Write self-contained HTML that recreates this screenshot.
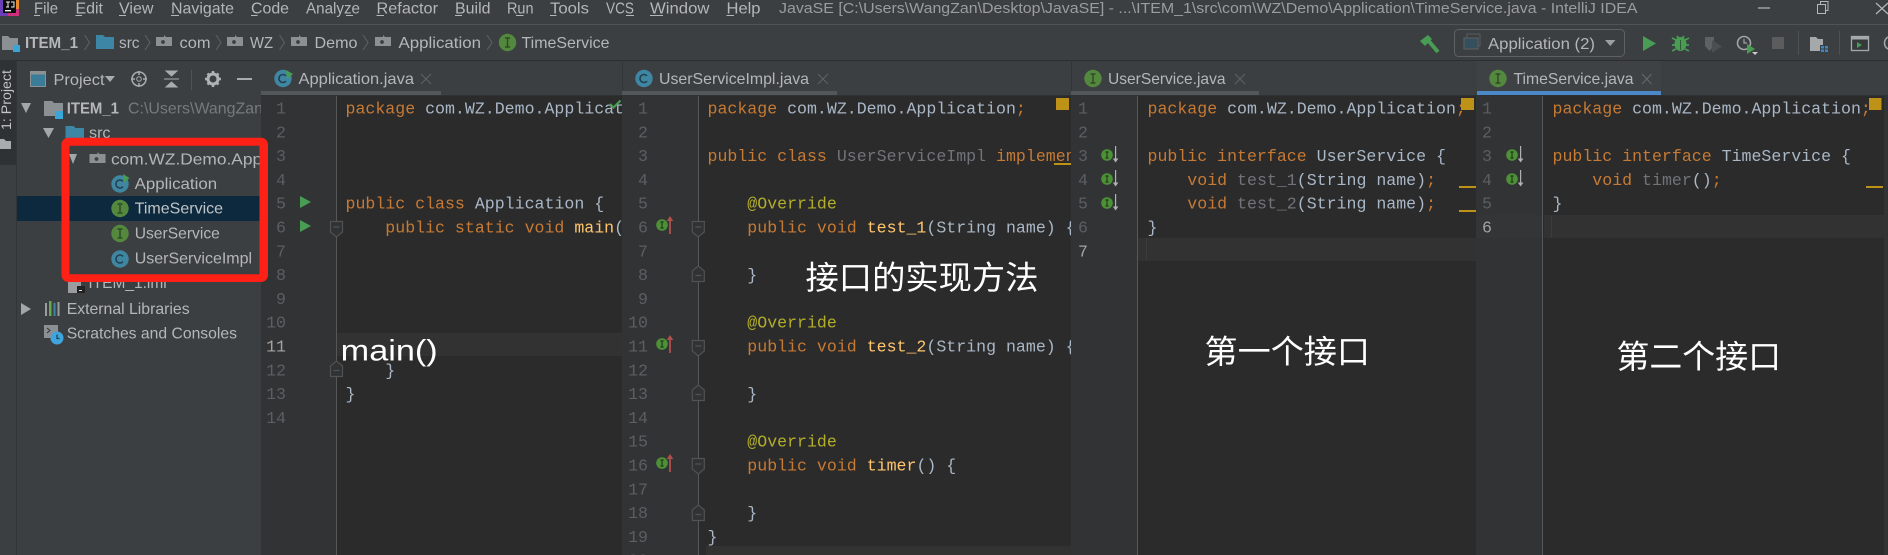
<!DOCTYPE html>
<html lang="zh">
<head>
<meta charset="utf-8">
<title>IntelliJ IDEA</title>
<style>
html,body{margin:0;padding:0;background:#3c3f41;width:1888px;height:555px;overflow:hidden}
svg{display:block}
text{white-space:pre}
.u{font-family:"Liberation Sans","Noto Sans CJK SC",sans-serif;font-size:16px;fill:#b4b7b9}
.t{fill:#9a9d9f;font-size:15px}
.d{fill:#777a7c}
.c{font-family:"Liberation Mono",monospace;font-size:16.58px;fill:#a9b7c6}
.n{font-family:"Liberation Mono",monospace;font-size:16.58px;fill:#5c5f61;text-anchor:end}
.na{fill:#a4a3a3}
.k{fill:#c67a34}
.m{fill:#ffc66d}
.a{fill:#b3ae2a}
.g{fill:#72737a}
.w{font-family:"Liberation Sans","Noto Sans CJK SC",sans-serif;fill:#fff}
.z{font-family:"Liberation Sans","Noto Sans CJK SC",sans-serif;fill:#fff;font-size:32.5px}
</style>
</head>
<body>
<svg xmlns="http://www.w3.org/2000/svg" width="1888" height="555" viewBox="0 0 1888 555">
<defs>
<g id="iI"><circle cx="9" cy="9" r="8.7" fill="#54883f"/><path d="M6.5 4.5h5M6.5 13.5h5M9 4.5v9" stroke="#2f4d22" stroke-width="1.5" fill="none"/></g>
<g id="iC"><circle cx="9" cy="9" r="8.7" fill="#3f86a3"/><path d="M12 6.4A4 4 0 1 0 12 11.6" stroke="#24404e" stroke-width="1.6" fill="none"/></g>
<g id="fold"><path d="M9 3H1v9h16V3h-6L9 1z" fill="#8a9093"/><circle cx="8" cy="8" r="1.9" fill="#3c3f41"/></g>
<path id="fd" d="M.5.5h12v10.500l-6 5-6-5zM3.500 6h6" fill="#303234" stroke="#505254" stroke-width="1.200"/>
<path id="fu" d="M.5 15.500h12V5L6.500 0 .5 5zM3.500 9.500h6" fill="#303234" stroke="#505254" stroke-width="1.200"/>
<g id="ov"><circle cx="6" cy="6" r="5.800" fill="#4e9038"/><path d="M4.400 3h3.200M4.400 9h3.200M6 3v6" stroke="#1f3d16" stroke-width="1.200"/><path d="M14 -3l3.300 5h-6.600zM13.100 1h1.800v14h-1.800z" fill="#b0504a"/></g>
<g id="im"><circle cx="6" cy="6" r="5.800" fill="#4e9038"/><path d="M4.400 3h3.200M4.400 9h3.200M6 3v6" stroke="#1f3d16" stroke-width="1.200"/><path d="M14 -3h1.200v13h-1.200zM11.800 9.500h5.600l-2.800 4z" fill="#afb1b3"/></g>
<clipPath id="c0"><rect x="17" y="96" width="244" height="459"/></clipPath>
<clipPath id="c1"><rect x="336" y="96" width="286" height="459"/></clipPath>
<clipPath id="c2"><rect x="698" y="96" width="373" height="459"/></clipPath>
<clipPath id="c3"><rect x="1137" y="96" width="339" height="459"/></clipPath>
<clipPath id="c4"><rect x="1543" y="96" width="341" height="459"/></clipPath>
</defs>

<rect width="1888" height="555" fill="#3c3f41"/>

<!-- title bar -->
<rect y="24" width="1888" height="1" fill="#505355"/>
<rect y="60" width="1888" height="1" fill="#2c2e2f"/>
<rect x="0" y="0" width="19" height="16" fill="#cf2f7c"/>
<rect x="0" y="0" width="8" height="16" fill="#6a3fb8"/>
<rect x="13" y="0" width="6" height="9" fill="#e98a2c"/>
<rect x="3" y="0" width="13" height="13" fill="#0c0c0c"/>
<rect x="5" y="10" width="6" height="1.400" fill="#eee"/>
<path d="M6 2h4M8 2v5M6 7h3M11 2h3v5h-3" stroke="#eee" stroke-width="1" fill="none"/>
<text class="u" x="34" y="13.500" textLength="24" lengthAdjust="spacingAndGlyphs">File</text>
<text class="u" x="75.500" y="13.500" textLength="27.500" lengthAdjust="spacingAndGlyphs">Edit</text>
<text class="u" x="119" y="13.500" textLength="34.500" lengthAdjust="spacingAndGlyphs">View</text>
<text class="u" x="171" y="13.500" textLength="63" lengthAdjust="spacingAndGlyphs">Navigate</text>
<text class="u" x="251" y="13.500" textLength="38" lengthAdjust="spacingAndGlyphs">Code</text>
<text class="u" x="306" y="13.500" textLength="54" lengthAdjust="spacingAndGlyphs">Analyze</text>
<text class="u" x="376.500" y="13.500" textLength="61.500" lengthAdjust="spacingAndGlyphs">Refactor</text>
<text class="u" x="455" y="13.500" textLength="35.500" lengthAdjust="spacingAndGlyphs">Build</text>
<text class="u" x="507" y="13.500" textLength="26.500" lengthAdjust="spacingAndGlyphs">Run</text>
<text class="u" x="550" y="13.500" textLength="39" lengthAdjust="spacingAndGlyphs">Tools</text>
<text class="u" x="606" y="13.500" textLength="28" lengthAdjust="spacingAndGlyphs">VCS</text>
<text class="u" x="650" y="13.500" textLength="59.500" lengthAdjust="spacingAndGlyphs">Window</text>
<text class="u" x="726.500" y="13.500" textLength="34" lengthAdjust="spacingAndGlyphs">Help</text>
<path d="M34 15.500h6M75.500 15.500h6.500M119 15.500h7M171 15.500h8M251 15.500h6.500M346 15.500h7M376.500 15.500h7.500M455 15.500h7M516 15.500h7.500M550 15.500h6.500M626 15.500h8M650 15.500h13M726.500 15.500h7.500" stroke="#b4b7b9" stroke-width="1" fill="none"/>
<text class="u t" x="779" y="13" textLength="858.500" lengthAdjust="spacingAndGlyphs">JavaSE [C:\Users\WangZan\Desktop\JavaSE] - ...\ITEM_1\src\com\WZ\Demo\Application\TimeService.java - IntelliJ IDEA</text>
<path d="M1758 8h12" stroke="#b4b7b9" stroke-width="1.200"/>
<path d="M1817.500 4.500h8v9h-8zM1820.500 4.500v-3h7.500v9h-2.500" stroke="#b4b7b9" stroke-width="1" fill="none"/>
<path d="M1876 3l12 11M1888 3l-12 11" stroke="#b4b7b9" stroke-width="1.200" fill="none"/>

<!-- breadcrumb -->
<path d="M2 36h6l2 2h8v12H2z" fill="#8a9093"/><rect x="13" y="45" width="7" height="7" fill="#3aa6d8"/>
<text class="u" x="25" y="48" textLength="53" lengthAdjust="spacingAndGlyphs" style="font-weight:bold">ITEM_1</text>
<path d="M84.500 35l5 7.500-5 7.500M145 35l5 7.500-5 7.500M216 35l5 7.500-5 7.500M279.500 35l5 7.500-5 7.500M363 35l5 7.500-5 7.500M487 35l5 7.500-5 7.500" stroke="#5f6264" stroke-width="1" fill="none"/>
<path d="M96 35h7l2 2h9v12H96z" fill="#3d86a5"/>
<text class="u" x="119" y="48" textLength="20.500" lengthAdjust="spacingAndGlyphs">src</text>
<use href="#fold" x="155" y="34"/>
<text class="u" x="179.500" y="48" textLength="31" lengthAdjust="spacingAndGlyphs">com</text>
<use href="#fold" x="226" y="34"/>
<text class="u" x="250" y="48" textLength="23" lengthAdjust="spacingAndGlyphs">WZ</text>
<use href="#fold" x="290" y="34"/>
<text class="u" x="314.500" y="48" textLength="43" lengthAdjust="spacingAndGlyphs">Demo</text>
<use href="#fold" x="374" y="34"/>
<text class="u" x="398.500" y="48" textLength="82.500" lengthAdjust="spacingAndGlyphs">Application</text>
<use href="#iI" x="498.500" y="33.500"/>
<text class="u" x="521.500" y="48" textLength="88" lengthAdjust="spacingAndGlyphs">TimeService</text>

<!-- right toolbar -->
<path d="M1438 52l-11-13" stroke="#499c54" stroke-width="4" fill="none"/>
<path d="M1420 41l8-6 4 4-7 7z" fill="#499c54"/>
<rect x="1454.500" y="29.500" width="170" height="27" rx="4" fill="none" stroke="#5e6163" stroke-width="1"/>
<rect x="1467" y="34" width="13" height="12" fill="none" stroke="#555859" stroke-width="1.200"/>
<rect x="1464" y="38" width="14" height="11" fill="#34505c" stroke="#5e6163" stroke-width="1"/>
<text class="u" x="1488" y="49" textLength="107" lengthAdjust="spacingAndGlyphs">Application (2)</text>
<path d="M1605 40h10.500l-5.250 6z" fill="#9da0a2"/>
<path d="M1643 36l13 7.500-13 7.500z" fill="#499c54"/>
<ellipse cx="1680.500" cy="44" rx="6" ry="7" fill="#499c54"/>
<path d="M1672 38l4 2M1689 38l-4 2M1672 45h17M1672 51l4-2M1689 51l-4-2M1677 36l2 3M1684 36l-2 3" stroke="#499c54" stroke-width="1.800" fill="none"/>
<path d="M1680.500 40v10" stroke="#2f5a33" stroke-width="1"/>
<path d="M1705 37h9v9l-4.500 5-4.500-5z" fill="#5f6264"/><path d="M1712 40l10 6.500-10 6.500z" fill="#4c4f51"/>
<circle cx="1744" cy="43" r="6.500" fill="none" stroke="#a2a5a7" stroke-width="1.600"/>
<path d="M1744 39v4h3" stroke="#a2a5a7" stroke-width="1.200" fill="none"/>
<path d="M1747 44l8 5-8 5z" fill="#499c54"/><path d="M1752 52h6l-3 3z" fill="#ccc"/>
<rect x="1772" y="37" width="12" height="12" fill="#5a5c5e"/>
<rect x="1798" y="31" width="1" height="24" fill="#4e5153"/>
<path d="M1810 37h6l2 2h5v12h-13z" fill="#a6a9ab"/>
<rect x="1820" y="45" width="8" height="7" fill="#3c3f41"/>
<path d="M1821 46h3v2.500h-3zM1825 46h3v2.500h-3zM1821 49.500h3V52h-3zM1825 49.500h3V52h-3z" fill="#3d86c6"/>
<rect x="1839" y="31" width="1" height="24" fill="#4e5153"/>
<rect x="1851.500" y="36.500" width="17" height="14" fill="#36393a" stroke="#a6a9ab" stroke-width="1.300"/>
<rect x="1851.500" y="36.500" width="17" height="3" fill="#a6a9ab"/>
<path d="M1857 42l5 3-5 3z" fill="#499c54"/>
<path d="M1888 37a7 7 0 0 0-3.500 6 7 7 0 0 0 3.500 6" fill="none" stroke="#a6a9ab" stroke-width="1.500"/>

<!-- left tool strip -->
<rect x="0" y="60" width="16" height="105" fill="#2f3234"/>
<rect x="16" y="61" width="1" height="494" fill="#323537"/>
<text class="u" transform="translate(11,130) rotate(-90)" textLength="60" lengthAdjust="spacingAndGlyphs" style="font-size:13.500px;fill:#c2c4c6">1: Project</text>
<path d="M0 139h4l2 2h5v8H0z" fill="#a9acae"/>

<!-- project header -->
<rect x="30.500" y="71.500" width="15" height="15" fill="#3b7d99" stroke="#8c9194" stroke-width="1"/>
<rect x="30.500" y="71.500" width="15" height="3" fill="#8c9194"/>
<text class="u" x="53.500" y="85" textLength="51" lengthAdjust="spacingAndGlyphs">Project</text>
<path d="M105 76h10l-5 6z" fill="#a9acae"/>
<circle cx="139" cy="79" r="7" fill="none" stroke="#a9acae" stroke-width="1.500"/>
<circle cx="139" cy="79" r="2.300" fill="none" stroke="#a9acae" stroke-width="1"/>
<path d="M139 71v4M139 83v4M131 79h4M143 79h4" stroke="#a9acae" stroke-width="1.500"/>
<path d="M164 79h15M166 71l5.500 5 5.500-5zM166 87l5.500-5 5.500 5z" stroke="#a9acae" fill="#a9acae" stroke-width="1"/>
<rect x="191" y="70" width="1" height="20" fill="#505355"/>
<circle cx="213" cy="79" r="5" fill="none" stroke="#b0b3b5" stroke-width="3"/>
<path d="M213 71v3M213 84v3M205 79h3M218 79h3M207.500 73.500l2 2M216.500 82.500l2 2M218.500 73.500l-2 2M209.500 82.500l-2 2" stroke="#b0b3b5" stroke-width="2.500"/>
<path d="M237 79h15" stroke="#a9acae" stroke-width="2"/>

<!-- editor regions -->
<rect x="261" y="96" width="75" height="459" fill="#313335"/>
<rect x="336" y="96" width="286" height="459" fill="#2b2b2b"/>
<rect x="622" y="96" width="76" height="459" fill="#313335"/>
<rect x="698" y="96" width="373" height="459" fill="#2b2b2b"/>
<rect x="1071" y="96" width="66" height="459" fill="#313335"/>
<rect x="1137" y="96" width="339" height="459" fill="#2b2b2b"/>
<rect x="1476" y="96" width="67" height="459" fill="#313335"/>
<rect x="1543" y="96" width="341" height="459" fill="#2b2b2b"/>
<rect x="1884" y="96" width="4" height="459" fill="#313335"/>
<rect x="261" y="95" width="1627" height="1" fill="#2f3133"/>
<!-- current lines -->
<rect x="337" y="333" width="285" height="23" fill="#323232"/>
<rect x="706" y="546" width="365" height="9" fill="#323232"/>
<rect x="1138" y="238" width="338" height="23" fill="#323232"/>
<rect x="1476" y="215" width="67" height="23" fill="#333537"/>
<rect x="1544" y="215" width="340" height="23" fill="#323232"/>
<rect x="1146" y="238" width="1" height="23" fill="#3c3c3c"/>
<rect x="1551" y="215" width="1" height="23" fill="#3c3c3c"/>
<!-- gutter dividers -->
<rect x="336" y="96" width="1" height="459" fill="#555759"/>
<rect x="698" y="96" width="1" height="459" fill="#555759"/>
<rect x="1137" y="96" width="1" height="459" fill="#555759"/>
<rect x="1542" y="96" width="1" height="459" fill="#555759"/>

<!-- tabs -->
<rect x="261" y="91" width="180" height="4" fill="#54575a"/>
<use href="#iC" x="274" y="69.500"/>
<path d="M286 70l7 4-6 5z" fill="#499c54"/>
<text class="u" x="298.500" y="84" textLength="115.500" lengthAdjust="spacingAndGlyphs">Application.java</text>
<path d="M421 74l10 10M431 74l-10 10" stroke="#5f6264" stroke-width="1" fill="none"/>
<rect x="622" y="60" width="1" height="35" fill="#323537"/>
<rect x="622" y="91" width="215" height="4" fill="#54575a"/>
<use href="#iC" x="635" y="69.500"/>
<text class="u" x="659" y="84" textLength="150" lengthAdjust="spacingAndGlyphs">UserServiceImpl.java</text>
<path d="M818 74l10 10M828 74l-10 10" stroke="#5f6264" stroke-width="1" fill="none"/>
<rect x="1071" y="60" width="1" height="35" fill="#323537"/>
<rect x="1071" y="91" width="188" height="4" fill="#54575a"/>
<use href="#iI" x="1084" y="69.500"/>
<text class="u" x="1108" y="84" textLength="117.500" lengthAdjust="spacingAndGlyphs">UserService.java</text>
<path d="M1235 74l10 10M1245 74l-10 10" stroke="#5f6264" stroke-width="1" fill="none"/>
<rect x="1477" y="61" width="184" height="30" fill="#3f4244"/>
<rect x="1477" y="91" width="184" height="4" fill="#4a88c7"/>
<use href="#iI" x="1489" y="69.500"/>
<text class="u" x="1513.500" y="84" textLength="120" lengthAdjust="spacingAndGlyphs">TimeService.java</text>
<path d="M1642 74l9.500 10M1651.500 74l-9.500 10" stroke="#66696b" stroke-width="1" fill="none"/>

<!-- project tree -->
<rect x="17" y="196" width="244" height="25" fill="#0d293e"/>
<g clip-path="url(#c0)">
<path d="M21 103h10l-5 10z" fill="#a4a7a9"/>
<path d="M44 101h8l2 2h9v13H44z" fill="#8a9093"/><rect x="55" y="111" width="8" height="8" fill="#3aa6d8"/>
<text class="u" x="66.700" y="113.500" textLength="52.300" lengthAdjust="spacingAndGlyphs" style="font-weight:bold">ITEM_1</text>
<text class="u d" x="128" y="113.500" textLength="135" lengthAdjust="spacingAndGlyphs">C:\Users\WangZan</text>
<path d="M43 128h11l-5.500 10z" fill="#a4a7a9"/>
<path d="M65.500 126h8l2 2h8.500v12h-18.500z" fill="#3d86a5"/>
<text class="u" x="89" y="138" textLength="21.500" lengthAdjust="spacingAndGlyphs">src</text>
<path d="M69 154h8l-4 10z" fill="#a4a7a9"/>
<use href="#fold" x="88.500" y="151"/>
<text class="u" x="111" y="164.300" textLength="205" lengthAdjust="spacingAndGlyphs">com.WZ.Demo.Application</text>
<use href="#iC" x="111" y="175"/>
<path d="M123 174l6.500 4-5.500 4.500z" fill="#499c54"/>
<text class="u" x="134.700" y="189" textLength="82.400" lengthAdjust="spacingAndGlyphs">Application</text>
<use href="#iI" x="111" y="199.500"/>
<text class="u" x="134.700" y="213.500" textLength="88.400" lengthAdjust="spacingAndGlyphs" style="fill:#c0c4c6">TimeService</text>
<use href="#iI" x="111" y="224.500"/>
<text class="u" x="134.700" y="238.700" textLength="85.200" lengthAdjust="spacingAndGlyphs">UserService</text>
<use href="#iC" x="111" y="250"/>
<text class="u" x="134.700" y="263.700" textLength="117.400" lengthAdjust="spacingAndGlyphs">UserServiceImpl</text>
<rect x="68" y="278" width="13" height="15" fill="#9a9d9f"/><rect x="77" y="286" width="8" height="7" fill="#222"/><rect x="79" y="290" width="3" height="1" fill="#ddd"/>
<text class="u" x="88.400" y="288" textLength="78.300" lengthAdjust="spacingAndGlyphs">ITEM_1.iml</text>
<path d="M21 303l10 6-10 6z" fill="#a4a7a9"/>
<path d="M45 303h2v13h-2zM49 301h2.500v15H49zM53.500 303h2v13h-2zM57.500 302h2v14h-2z" fill="#9a9d9f"/>
<rect x="49" y="301" width="2.500" height="15" fill="#6aa84f"/><rect x="53.500" y="303" width="2" height="13" fill="#3d86a5"/>
<text class="u" x="66.700" y="314" textLength="122.900" lengthAdjust="spacingAndGlyphs">External Libraries</text>
<rect x="44" y="325" width="14" height="13" fill="#8a9093"/><path d="M47 328l3 2.500-3 2.500" stroke="#333" fill="none"/>
<circle cx="57" cy="338" r="6.500" fill="#3fa5dc"/><path d="M57 334.500v4h2.500" stroke="#1e3f52" stroke-width="1.200" fill="none"/>
<text class="u" x="66.700" y="338.500" textLength="170.300" lengthAdjust="spacingAndGlyphs">Scratches and Consoles</text>
</g>

<!-- line numbers pane 1 -->
<text class="n" x="286" y="113.500">1</text><text class="n" x="286" y="137.300">2</text><text class="n" x="286" y="161.100">3</text><text class="n" x="286" y="184.900">4</text><text class="n" x="286" y="208.700">5</text><text class="n" x="286" y="232.500">6</text><text class="n" x="286" y="256.300">7</text><text class="n" x="286" y="280.100">8</text><text class="n" x="286" y="303.900">9</text><text class="n" x="286" y="327.700">10</text><text class="n na" x="286" y="351.500">11</text><text class="n" x="286" y="375.300">12</text><text class="n" x="286" y="399.100">13</text><text class="n" x="286" y="422.900">14</text>
<!-- line numbers pane 2 -->
<text class="n" x="648" y="113.500">1</text><text class="n" x="648" y="137.300">2</text><text class="n" x="648" y="161.100">3</text><text class="n" x="648" y="184.900">4</text><text class="n" x="648" y="208.700">5</text><text class="n" x="648" y="232.500">6</text><text class="n" x="648" y="256.300">7</text><text class="n" x="648" y="280.100">8</text><text class="n" x="648" y="303.900">9</text><text class="n" x="648" y="327.700">10</text><text class="n" x="648" y="351.500">11</text><text class="n" x="648" y="375.300">12</text><text class="n" x="648" y="399.100">13</text><text class="n" x="648" y="422.900">14</text><text class="n" x="648" y="446.700">15</text><text class="n" x="648" y="470.500">16</text><text class="n" x="648" y="494.300">17</text><text class="n" x="648" y="518.100">18</text><text class="n" x="648" y="541.900">19</text><text class="n" x="648" y="565.700">20</text>
<!-- line numbers pane 3 -->
<text class="n" x="1088" y="113.500">1</text><text class="n" x="1088" y="137.300">2</text><text class="n" x="1088" y="161.100">3</text><text class="n" x="1088" y="184.900">4</text><text class="n" x="1088" y="208.700">5</text><text class="n" x="1088" y="232.500">6</text><text class="n na" x="1088" y="256.300">7</text>
<!-- line numbers pane 4 -->
<text class="n" x="1492" y="113.500">1</text><text class="n" x="1492" y="137.300">2</text><text class="n" x="1492" y="161.100">3</text><text class="n" x="1492" y="184.900">4</text><text class="n" x="1492" y="208.700">5</text><text class="n na" x="1492" y="232.500">6</text>

<!-- gutter icons -->
<path d="M300 196l11 6-11 6zM300 220l11 6-11 6z" fill="#499c54"/>
<use href="#fd" x="330" y="221"/>
<use href="#fu" x="330" y="361"/>
<use href="#fd" x="691.800" y="221"/><use href="#fu" x="691.800" y="266"/><use href="#fd" x="691.800" y="340"/><use href="#fu" x="691.800" y="385"/><use href="#fd" x="691.800" y="458"/><use href="#fu" x="691.800" y="505"/>
<use href="#ov" x="656" y="219"/><use href="#ov" x="656" y="338"/><use href="#ov" x="656" y="457"/>
<use href="#im" x="1101" y="149"/><use href="#im" x="1101" y="173"/><use href="#im" x="1101" y="197"/>
<use href="#im" x="1506" y="149"/><use href="#im" x="1506" y="173"/>

<!-- pane 1 code -->
<g clip-path="url(#c1)">
<text class="c" x="345.500" y="113.500"><tspan class="k">package</tspan> com.WZ.Demo.Application;</text>
<text class="c" x="345.500" y="208.700"><tspan class="k">public class</tspan> Application {</text>
<text class="c" x="345.500" y="232.500">    <tspan class="k">public static void</tspan> <tspan class="m">main</tspan>(String[] args) {</text>
<text class="c" x="345.500" y="375.300">    }</text>
<text class="c" x="345.500" y="399.100">}</text>
</g>
<path d="M610 104l3.500 3.500 7-7" stroke="#499c54" stroke-width="2.200" fill="none"/>
<text class="w" x="340.700" y="360.500" textLength="97" lengthAdjust="spacingAndGlyphs" style="font-size:30px">main()</text>

<!-- pane 2 code -->
<g clip-path="url(#c2)">
<text class="c" x="707.500" y="113.500"><tspan class="k">package</tspan> com.WZ.Demo.Application<tspan class="k">;</tspan></text>
<text class="c" x="707.500" y="161.100"><tspan class="k">public class</tspan> <tspan class="g">UserServiceImpl</tspan> <tspan class="k">implements</tspan> TimeService {</text>
<text class="c" x="707.500" y="208.700">    <tspan class="a">@Override</tspan></text>
<text class="c" x="707.500" y="232.500">    <tspan class="k">public void</tspan> <tspan class="m">test_1</tspan>(String name) {</text>
<text class="c" x="707.500" y="280.100">    }</text>
<text class="c" x="707.500" y="327.700">    <tspan class="a">@Override</tspan></text>
<text class="c" x="707.500" y="351.500">    <tspan class="k">public void</tspan> <tspan class="m">test_2</tspan>(String name) {</text>
<text class="c" x="707.500" y="399.100">    }</text>
<text class="c" x="707.500" y="446.700">    <tspan class="a">@Override</tspan></text>
<text class="c" x="707.500" y="470.500">    <tspan class="k">public void</tspan> <tspan class="m">timer</tspan>() {</text>
<text class="c" x="707.500" y="518.100">    }</text>
<text class="c" x="707.500" y="541.900">}</text>
</g>
<rect x="1056" y="98" width="13" height="12" fill="#be9117"/>
<rect x="1054" y="163" width="17" height="2" fill="#be9117"/>
<text class="z" x="805.500" y="289" textLength="233" lengthAdjust="spacingAndGlyphs">接口的实现方法</text>

<!-- pane 3 code -->
<g clip-path="url(#c3)">
<text class="c" x="1147.500" y="113.500"><tspan class="k">package</tspan> com.WZ.Demo.Application<tspan class="k">;</tspan></text>
<text class="c" x="1147.500" y="161.100"><tspan class="k">public interface</tspan> UserService {</text>
<text class="c" x="1147.500" y="184.900">    <tspan class="k">void</tspan> <tspan class="g">test_1</tspan>(String name)<tspan class="k">;</tspan></text>
<text class="c" x="1147.500" y="208.700">    <tspan class="k">void</tspan> <tspan class="g">test_2</tspan>(String name)<tspan class="k">;</tspan></text>
<text class="c" x="1147.500" y="232.500">}</text>
</g>
<rect x="1461" y="98" width="13" height="12" fill="#be9117"/>
<rect x="1459" y="186" width="17" height="2" fill="#be9117"/>
<rect x="1459" y="210" width="17" height="2" fill="#be9117"/>
<text class="z" x="1204.500" y="363" textLength="165.500" lengthAdjust="spacingAndGlyphs">第一个接口</text>

<!-- pane 4 code -->
<g clip-path="url(#c4)">
<text class="c" x="1552.500" y="113.500"><tspan class="k">package</tspan> com.WZ.Demo.Application<tspan class="k">;</tspan></text>
<text class="c" x="1552.500" y="161.100"><tspan class="k">public interface</tspan> TimeService {</text>
<text class="c" x="1552.500" y="184.900">    <tspan class="k">void</tspan> <tspan class="g">timer</tspan>()<tspan class="k">;</tspan></text>
<text class="c" x="1552.500" y="208.700">}</text>
</g>
<rect x="1869" y="98" width="12.500" height="12" fill="#be9117"/>
<rect x="1866" y="186" width="17" height="2" fill="#be9117"/>
<text class="z" x="1616.500" y="368" textLength="164.500" lengthAdjust="spacingAndGlyphs">第二个接口</text>

<!-- red annotation -->
<path fill-rule="evenodd" fill="#ff2116" d="M68.500 137.700H261a7 7 0 0 1 7 7V275a7 7 0 0 1-7 7H68.500a7 7 0 0 1-7-7V144.700a7 7 0 0 1 7-7zM69.500 145.700V274.300H259.500V145.700z"/>
</svg>
</body>
</html>
